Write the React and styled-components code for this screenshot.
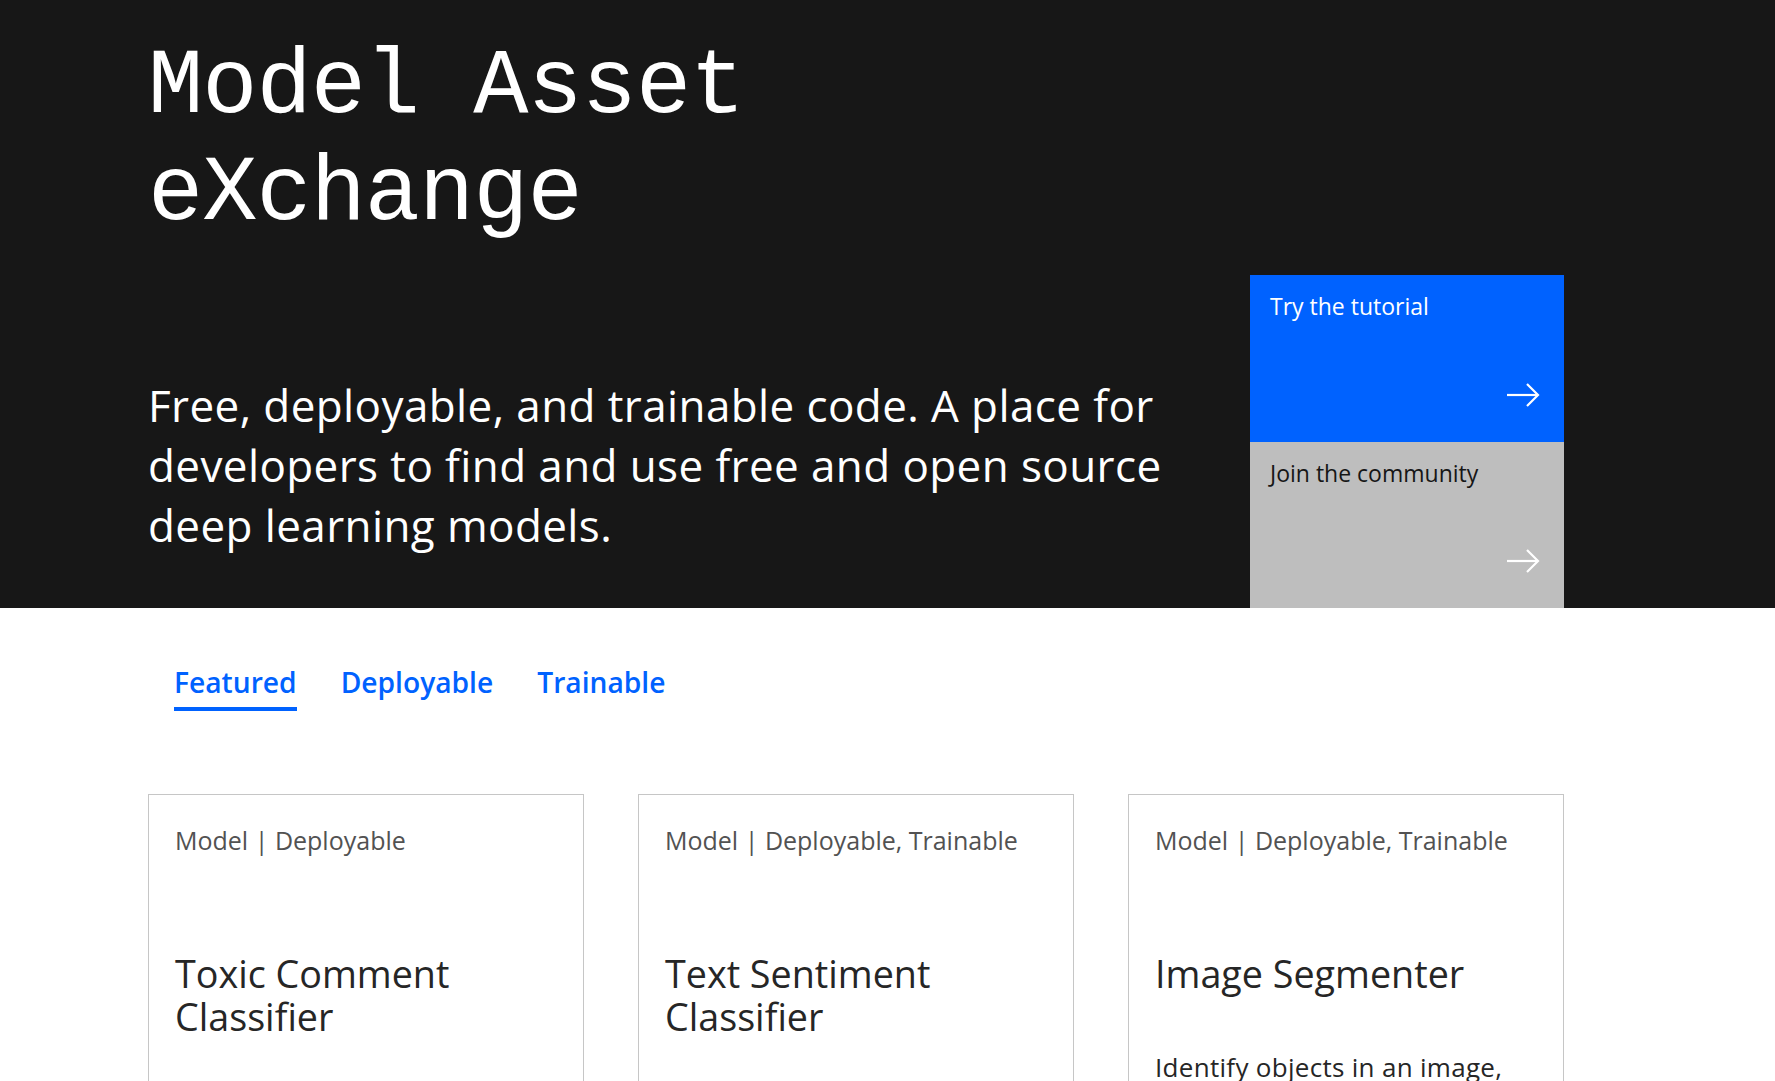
import React from 'react';
import styled, { createGlobalStyle } from 'styled-components';

const GlobalStyle = createGlobalStyle`
    body {
        margin: 0;
        background: #ffffff;
        font-family: "Open Sans", "Liberation Sans", sans-serif;
        color: #161616;
    }
`

const Page = styled.div`
    width: 100%;
    overflow: hidden;
`

const Hero = styled.header`
    background: #171717;
    color: #ffffff;
    padding: 34px 0 0 148px;
`

const Title = styled.h1`
    margin: 0 0 27px 0;
    font-family: "Liberation Mono", "DejaVu Sans Mono", monospace;
    font-weight: 400;
    font-size: 92px;
    line-height: 107px;
    letter-spacing: -1px;
`

const HeroRow = styled.div`
    display: grid;
    grid-template-columns: 1102px 314px;
    align-items: end;
`

const Lead = styled.p`
    margin: 0 0 53px 0;
    max-width: 1070px;
    font-size: 44px;
    line-height: 60px;
    letter-spacing: 0.4px;
    font-weight: 400;
`

const Links = styled.div`
    display: flex;
    flex-direction: column;
`

const LinkBox = styled.a`
    display: flex;
    flex-direction: column;
    justify-content: space-between;
    height: ${p => p.$primary ? '167px' : '166px'};
    box-sizing: border-box;
    padding: 16px 24px 35px 20px;
    background: ${p => p.$primary ? '#0062ff' : '#bebebe'};
    color: ${p => p.$primary ? '#ffffff' : '#161616'};
    font-size: 23px;
    line-height: 30px;
    text-decoration: none;
    cursor: pointer;
`

const Arrow = styled.svg`
    align-self: flex-end;
    width: 33px;
    height: 24px;
`

const Tabs = styled.nav`
    display: flex;
    gap: 44px;
    margin: 56px 0 0 174px;
`

const Tab = styled.a`
    padding-bottom: 7px;
    border-bottom: 4px solid ${p => p.$active ? '#0062ff' : 'transparent'};
    color: #0062ff;
    font-size: 28.2px;
    line-height: 36px;
    font-weight: 600;
    cursor: pointer;
`

const Cards = styled.section`
    display: grid;
    grid-template-columns: repeat(3, 436px);
    gap: 54px;
    margin: 83px 0 0 148px;
`

const Card = styled.article`
    border: 1px solid #c6c6c6;
    height: 320px;
    padding: 29px 26px 0 26px;
`

const Tag = styled.div`
    font-size: 25px;
    line-height: 32px;
    color: #525252;
`

const CardTitle = styled.h2`
    margin: 96px 0 0 0;
    font-size: 37.7px;
    line-height: 43px;
    font-weight: 400;
    color: #262626;
`

const CardText = styled.p`
    margin: 55px 0 0 0;
    font-size: 26px;
    line-height: 34px;
    letter-spacing: 0.3px;
    color: #262626;
`

const ArrowIcon = () => (
    <Arrow viewBox="0 0 33 24" fill="none" stroke="#ffffff" strokeWidth="2.2">
        <line x1="0" y1="12" x2="31" y2="12"/>
        <polyline points="20,1 31,12 20,23"/>
    </Arrow>
)

const models = [
    { tag: 'Model | Deployable', title: 'Toxic Comment Classifier', text: 'Detect 6 types of toxicity in user comments.' },
    { tag: 'Model | Deployable, Trainable', title: 'Text Sentiment Classifier', text: 'Detect the sentiment captured in short pieces of text.' },
    { tag: 'Model | Deployable, Trainable', title: 'Image Segmenter', text: 'Identify objects in an image, additionally assigning each pixel of the image to a particular object.' },
]

const App = () => {
    return (
        <Page>
            <GlobalStyle/>
            <Hero>
                <Title>Model Asset<br/>eXchange</Title>
                <HeroRow>
                    <Lead>Free, deployable, and trainable code. A place for developers to find and use free and open source deep learning models.</Lead>
                    <Links>
                        <LinkBox $primary>
                            <span>Try the tutorial</span>
                            <ArrowIcon/>
                        </LinkBox>
                        <LinkBox>
                            <span>Join the community</span>
                            <ArrowIcon/>
                        </LinkBox>
                    </Links>
                </HeroRow>
            </Hero>
            <Tabs>
                <Tab $active>Featured</Tab>
                <Tab>Deployable</Tab>
                <Tab>Trainable</Tab>
            </Tabs>
            <Cards>
                {models.map(m => (
                    <Card key={m.title}>
                        <Tag>{m.tag}</Tag>
                        <CardTitle>{m.title}</CardTitle>
                        <CardText>{m.text}</CardText>
                    </Card>
                ))}
            </Cards>
        </Page>
    )
}

export default App
